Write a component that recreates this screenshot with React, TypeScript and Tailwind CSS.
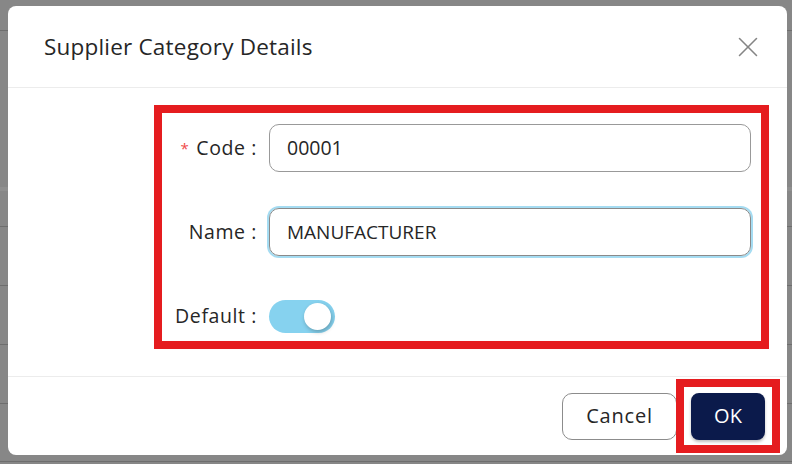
import { X } from "lucide-react"

function Field({ label, required, children }: { label: string; required?: boolean; children: React.ReactNode }) {
  return (
    <div className="flex h-[48px] items-center">
      <label className="flex w-[95px] shrink-0 items-center justify-end whitespace-nowrap text-[19.5px] tracking-[0.6px] text-[#262626]">
        {required && <span className="mr-[7px] text-[15px] text-[#ef4a4a]">*</span>}
        {label} :
      </label>
      <div className="ml-[12px] flex flex-1 items-center">{children}</div>
    </div>
  )
}

export default function App() {
  return (
    <div
      className="relative h-[464px] w-[792px] overflow-hidden bg-[#878787]"
      style={{ fontFamily: '"Open Sans", "Liberation Sans", sans-serif' }}
    >
      {/* page behind the dialog */}
      <div className="flex flex-col">
        <div className="h-[31px] border-b border-[#6e6e6e]" />
        <div className="h-[156px]" />
        <div className="h-[40px] border-t-4 border-b border-t-[#8f8f8f] border-b-[#6e6e6e]" />
        <div className="h-[59px] border-b border-[#6e6e6e]" />
        <div className="h-[59px] border-b border-[#6e6e6e]" />
        <div className="h-[59px] border-b border-[#6e6e6e]" />
        <div className="h-[58px] border-b border-[#6e6e6e]" />
      </div>

      <div className="absolute left-[8px] top-[6px] flex h-[449px] w-[779px] flex-col rounded-lg bg-white">
        <div className="flex h-[82px] items-center justify-between border-b border-[#ececec] pl-[36px] pr-[22px]">
          <h2 className="text-[22.5px] font-medium tracking-[0.2px] text-[#262626]">Supplier Category Details</h2>
          <X className="h-[34px] w-[34px] text-[#858585]" strokeWidth={1.1} />
        </div>

        <div className="h-[288px] pl-[146px] pt-[17px]">
          <div className="h-[244px] w-[615px] border-8 border-[#e51c1f] pr-[10px] pt-[11px]">
            <div className="flex flex-col gap-[36px]">
              <Field label="Code" required>
                <div className="flex h-[48px] w-full items-center rounded-[10px] border border-[#999999] px-[17px] text-[19.5px] text-[#262626]">
                  00001
                </div>
              </Field>
              <Field label="Name">
                <div className="flex h-[48px] w-full items-center rounded-[10px] border border-[#8a8a8a] px-[17px] text-[19px] text-[#262626] ring-2 ring-[#a5dcf2]">
                  MANUFACTURER
                </div>
              </Field>
              <Field label="Default">
                <div className="flex h-[33px] w-[66px] items-center justify-end rounded-full bg-[#86d2ef] pr-[4px]">
                  <div className="h-[27px] w-[27px] rounded-full bg-white shadow-[1px_2px_4px_rgba(0,0,0,0.25)]" />
                </div>
              </Field>
            </div>
          </div>
        </div>

        <div className="flex flex-1 items-center justify-end border-t border-[#ececec] pr-[7px]">
          <button className="h-[47px] w-[115px] rounded-[10px] border border-[#8c8c8c] text-[20px] tracking-[0.8px] text-[#262626]">
            Cancel
          </button>
          <div className="-ml-px flex h-[74px] w-[104px] items-center justify-center border-8 border-[#e51c1f]">
            <button className="h-[47px] w-[74px] rounded-lg bg-[#0b1a4b] text-[20px] text-white shadow-[0_2px_3px_rgba(0,0,0,0.25)]">
              OK
            </button>
          </div>
        </div>
      </div>
    </div>
  )
}
